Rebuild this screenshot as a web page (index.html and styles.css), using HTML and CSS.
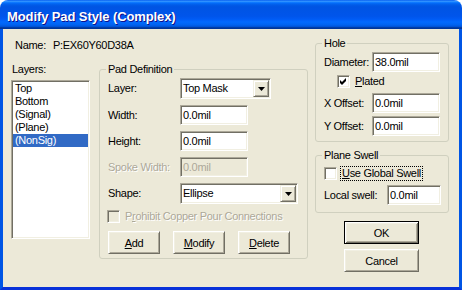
FILE: index.html
```html
<!DOCTYPE html>
<html lang="en">
<head>
  <meta charset="UTF-8" />
  <title>Modify Pad Style (Complex)</title>
  <link rel="stylesheet" href="styles.css">
</head>
<body>
  <div class="window">
    <div class="titlebar">Modify Pad Style (Complex)</div>

    <div class="client">
      <div class="left">
        <div class="name-row">
          <span class="name-label">Name:</span>
          <span>P:EX60Y60D38A</span>
        </div>

        <div class="main-row">
          <div class="layers">
            <div class="layers-label">Layers:</div>
            <ul class="listbox sunken">
              <li>Top</li>
              <li>Bottom</li>
              <li>(Signal)</li>
              <li>(Plane)</li>
              <li class="selected">(NonSig)</li>
            </ul>
          </div>

          <fieldset class="group pad-def">
            <legend>Pad Definition</legend>
            <div class="pad-body">
              <div class="row first">
                <label>Layer:</label>
                <div class="combo combo-layer sunken">
                  <span class="combo-text">Top Mask</span>
                  <span class="combo-btn raised">
                    <svg width="7" height="4" viewBox="0 0 7 4"><polygon points="0,0 7,0 3.5,4" fill="#000"/></svg>
                  </span>
                </div>
              </div>
              <div class="row">
                <label>Width:</label>
                <div class="edit sunken">0.0mil</div>
              </div>
              <div class="row">
                <label>Height:</label>
                <div class="edit sunken">0.0mil</div>
              </div>
              <div class="row">
                <label class="disabled">Spoke Width:</label>
                <div class="edit sunken disabled-edit">0.0mil</div>
              </div>
              <div class="row">
                <label>Shape:</label>
                <div class="combo combo-shape sunken">
                  <span class="combo-text">Ellipse</span>
                  <span class="combo-btn raised">
                    <svg width="7" height="4" viewBox="0 0 7 4"><polygon points="0,0 7,0 3.5,4" fill="#000"/></svg>
                  </span>
                </div>
              </div>
              <div class="row check-row prohibit">
                <span class="check sunken check-disabled"></span>
                <span class="disabled">P<u>r</u>ohibit Copper Pour Connections</span>
              </div>
              <div class="pad-buttons">
                <button class="btn small"><u>A</u>dd</button>
                <button class="btn small"><u>M</u>odify</button>
                <button class="btn small"><u>D</u>elete</button>
              </div>
            </div>
          </fieldset>
        </div>
      </div>

      <div class="right">
        <fieldset class="group hole">
          <legend>Hole</legend>
          <div class="side-body">
            <div class="row first">
              <label class="hole-label">Diameter:</label>
              <div class="edit sunken">38.0mil</div>
            </div>
            <div class="check-row plated">
              <span class="check sunken">
                <svg width="9" height="9" viewBox="0 0 9 9"><path d="M1 3 L3 5 L7 1 L7 4 L3 8 L1 6 Z" fill="#000"/></svg>
              </span>
              <span><u>P</u>lated</span>
            </div>
            <div class="row x-row">
              <label class="hole-label">X Offset:</label>
              <div class="edit sunken">0.0mil</div>
            </div>
            <div class="row y-row">
              <label class="hole-label">Y Offset:</label>
              <div class="edit sunken">0.0mil</div>
            </div>
          </div>
        </fieldset>

        <fieldset class="group swell">
          <legend>Plane Swell</legend>
          <div class="side-body">
            <div class="check-row global">
              <span class="check sunken"></span>
              <span class="focus"><u>U</u>se Global Swell</span>
            </div>
            <div class="row local-row">
              <label class="swell-label">Local swell:</label>
              <div class="edit edit-short sunken">0.0mil</div>
            </div>
          </div>
        </fieldset>

        <div class="dialog-buttons">
          <button class="btn wide default">OK</button>
          <button class="btn wide">Cancel</button>
        </div>
      </div>
    </div>
  </div>
</body>
</html>
```

FILE: styles.css
```css
* {
  box-sizing: border-box;
  margin: 0;
  padding: 0;
}

html, body {
  background: #fff;
}

body {
  font-family: "Liberation Sans", Arial, sans-serif;
  font-size: 11px;
  letter-spacing: -0.3px;
  color: #000;
}

.window {
  width: 462px;
  height: 290px;
  display: flex;
  flex-direction: column;
}

.titlebar {
  height: 29px;
  padding: 4px 0 0 7px;
  line-height: 25px;
  border-radius: 8px 8px 0 0;
  background: linear-gradient(to bottom,
    #0058ee 0%, #3593ff 4%, #288eff 6%, #127dff 8%, #036ffc 10%,
    #0262ee 14%, #0057e5 20%, #0054e3 24%, #0055eb 56%, #005bf5 66%,
    #026afe 76%, #0062ef 86%, #0052d6 92%, #0040ab 94%, #003092 100%);
  color: #fff;
  font-size: 13px;
  font-weight: bold;
  letter-spacing: -0.1px;
  text-shadow: 1px 1px #0f1089;
}

.client {
  flex: 1;
  display: flex;
  background: #ece9d8;
  border: 3px solid #0055e5;
  border-top: 0;
  border-bottom-color: #0831d9;
}

/* left part: name, layers list, pad definition */
.left {
  width: 297px;
  margin-left: 8px;
}

.name-row {
  display: flex;
  margin-top: 10px;
  padding-left: 4px;
  line-height: 13px;
}

.name-label {
  width: 38px;
}

.main-row {
  display: flex;
  margin-top: 11px;
}

.layers {
  width: 79px;
}

.layers-label {
  padding-left: 1px;
  line-height: 13px;
}

.listbox {
  list-style: none;
  margin-top: 4px;
  height: 159px;
  background: #fff;
}

.listbox li {
  line-height: 13px;
  padding-left: 2px;
}

.listbox li.selected {
  background: #316ac5;
  color: #fff;
}

.sunken {
  border: 1px solid;
  border-color: #aca899 #fff #fff #aca899;
  box-shadow: inset 1px 1px #716f64, inset -1px -1px #f1efe2;
  padding: 1px;
}

.raised {
  border: 1px solid;
  border-color: #f1efe2 #716f64 #716f64 #f1efe2;
  box-shadow: inset 1px 1px #fff, inset -1px -1px #aca899;
  background: #ece9d8;
}

.group {
  border: 1px solid #d0d0bf;
  border-radius: 3px;
  min-width: 0;
}

.group legend {
  margin-left: 6px;
  padding: 0 2px;
  line-height: 13px;
}

.pad-def {
  width: 209px;
  height: 196px;
  margin-left: 9px;
}

.pad-body {
  padding-left: 8px;
}

.row {
  display: flex;
  align-items: center;
  margin-top: 6px;
}

.row.first {
  margin-top: 2px;
}

.row label {
  width: 72px;
  line-height: 13px;
}

.edit {
  width: 68px;
  height: 20px;
  background: #fff;
  padding: 1px 0 0 2px;
  line-height: 16px;
}

.edit-short {
  width: 54px;
}

.disabled-edit {
  background: #ece9d8;
  color: #aca899;
}

.disabled {
  color: #aca899;
  text-shadow: 1px 1px #fff;
}

.combo {
  display: flex;
  height: 21px;
  background: #fff;
}

.combo-layer {
  width: 91px;
}

.combo-shape {
  width: 118px;
}

.combo-text {
  flex: 1;
  padding-left: 1px;
  line-height: 17px;
}

.combo-btn {
  width: 16px;
  display: flex;
  align-items: center;
  justify-content: center;
  padding-left: 1px;
}

.check-row {
  display: flex;
  align-items: center;
  gap: 5px;
  line-height: 13px;
}

.check {
  width: 13px;
  height: 13px;
  background: #fff;
  display: flex;
  align-items: center;
  justify-content: center;
  padding: 0;
}

.check-disabled {
  background: #ece9d8;
}

.prohibit {
  margin-top: 6px;
  margin-left: -1px;
}

.pad-buttons {
  display: flex;
  gap: 13px;
  margin-top: 8px;
}

.btn {
  font: inherit;
  letter-spacing: inherit;
  color: #000;
  height: 23px;
  border: 1px solid;
  border-color: #fff #716f64 #716f64 #fff;
  box-shadow: inset 1px 1px #f1efe2, inset -1px -1px #aca899;
  background: #ece9d8;
  text-align: center;
}

.btn.small {
  width: 52px;
}

.btn.wide {
  width: 75px;
}

.btn.default {
  border-color: #000;
  box-shadow: inset 1px 1px #fff, inset -1px -1px #716f64,
              inset 2px 2px #f1efe2, inset -2px -2px #aca899;
}

/* right part: hole, plane swell, OK/Cancel */
.right {
  width: 134px;
  margin-left: 7px;
}

.hole {
  height: 105px;
  margin-top: 8px;
}

.side-body {
  padding-left: 8px;
}

.hole-label {
  width: 48px !important;
}

.plated {
  margin-top: 3px;
  padding-left: 13px;
}

.x-row {
  margin-top: 5px;
}

.y-row {
  margin-top: 3px;
}

.swell {
  height: 64px;
  margin-top: 7px;
}

.global {
  margin-top: 5px;
}

.focus {
  outline: 1px dotted #000;
  outline-offset: 0;
  padding: 0 1px;
  margin-left: -1px;
}

.local-row {
  margin-top: 5px;
}

.swell-label {
  width: 63px !important;
}

.dialog-buttons {
  display: flex;
  flex-direction: column;
  gap: 5px;
  margin-top: 8px;
  padding-left: 29px;
}
```
